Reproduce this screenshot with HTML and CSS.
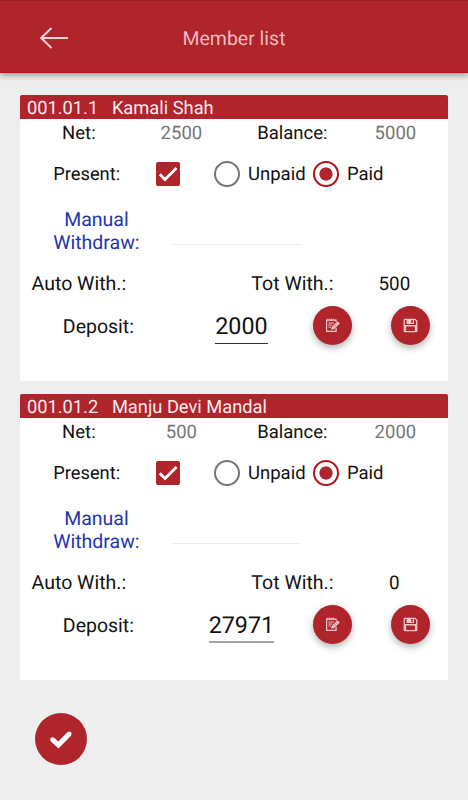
FILE: index.html
```html
<!DOCTYPE html>
<html lang="en">
<head>
  <meta charset="UTF-8" />
  <meta name="viewport" content="width=device-width, initial-scale=1" />
  <title>Member list</title>
  <link rel="stylesheet" href="styles.css">
</head>
<body>
  <!-- shared icons -->
  <svg class="icon-defs" xmlns="http://www.w3.org/2000/svg">
    <symbol id="icon-check" viewBox="0 0 24 24">
      <path d="M3.8 12.2 9 17.4 20.5 5.9" fill="none" stroke="#fff" stroke-width="2.8" />
    </symbol>
    <symbol id="icon-edit" viewBox="0 0 16 16">
      <path d="M11.8 10.5v3.7H1.7V2.3h10.1v1.6" fill="none" stroke="#f3c9cc" stroke-width="1.3" />
      <path d="M3 .7v2M5.1 .7v2M7.2 .7v2M9.3 .7v2" stroke="#f3c9cc" stroke-width="1" />
      <path d="M3.6 5.3h6M3.6 7.5h4.3M3.6 9.7h2.8" stroke="#f3c9cc" stroke-width="1" />
      <path d="M6.4 12.6l1-3.4L13.3 3.5l2.5 2.4-6 5.9z" fill="#f3c9cc" />
      <path d="M9 9.9l4.2-4.1" stroke="#b0242c" stroke-width=".5" />
    </symbol>
    <symbol id="icon-save" viewBox="0 0 16 16">
      <path d="M2 1.4h10.8l1.9 1.9v10.2a1 1 0 0 1-1 1H2.3a1 1 0 0 1-1-1V2.1a.7.7 0 0 1 .7-.7z" fill="none" stroke="#f3c9cc" stroke-width="1.4" />
      <path d="M2.6 14V8.2h10.8V14" fill="none" stroke="#f3c9cc" stroke-width="1.5" />
      <path d="M3.8 1.4h7.9v4.9H3.8z" fill="#f3c9cc" />
      <path d="M8.8 2.2h1.6v3.1H8.8z" fill="#b0242c" />
    </symbol>
  </svg>

  <header class="top-bar">
    <svg class="back" viewBox="0 0 30 24">
      <path d="M12.5 2 2.2 12l10.3 10M2.2 12H29" fill="none" stroke="#f6d3d5" stroke-width="2" />
    </svg>
    <h1>Member list</h1>
  </header>

  <main class="list">
    <section class="card">
      <div class="card-title"><span class="code">001.01.1</span><span>Kamali Shah</span></div>
      <div class="row net">
        <span>Net:</span>
        <span class="muted">2500</span>
        <span>Balance:</span>
        <span class="muted">5000</span>
      </div>
      <div class="row present">
        <span class="present-label">Present:</span>
        <span class="checkbox"><svg><use href="#icon-check" /></svg></span>
        <span class="radio"></span>
        <span class="unpaid">Unpaid</span>
        <span class="radio selected"></span>
        <span class="paid">Paid</span>
      </div>
      <div class="row manual">
        <span class="manual-label">Manual<br>Withdraw:</span>
        <span class="manual-input"></span>
      </div>
      <div class="row totals">
        <span>Auto With.:</span>
        <span></span>
        <span>Tot With.:</span>
        <span class="total">500</span>
      </div>
      <div class="row deposit">
        <span class="deposit-label">Deposit:</span>
        <span class="deposit-cell"><span class="amount">2000</span></span>
        <button class="round"><svg><use href="#icon-edit" /></svg></button>
        <button class="round save"><svg><use href="#icon-save" /></svg></button>
      </div>
    </section>

    <section class="card">
      <div class="card-title"><span class="code">001.01.2</span><span>Manju Devi Mandal</span></div>
      <div class="row net">
        <span>Net:</span>
        <span class="muted">500</span>
        <span>Balance:</span>
        <span class="muted">2000</span>
      </div>
      <div class="row present">
        <span class="present-label">Present:</span>
        <span class="checkbox"><svg><use href="#icon-check" /></svg></span>
        <span class="radio"></span>
        <span class="unpaid">Unpaid</span>
        <span class="radio selected"></span>
        <span class="paid">Paid</span>
      </div>
      <div class="row manual">
        <span class="manual-label">Manual<br>Withdraw:</span>
        <span class="manual-input"></span>
      </div>
      <div class="row totals">
        <span>Auto With.:</span>
        <span></span>
        <span>Tot With.:</span>
        <span class="total">0</span>
      </div>
      <div class="row deposit">
        <span class="deposit-label">Deposit:</span>
        <span class="deposit-cell"><span class="amount focused">27971</span></span>
        <button class="round"><svg><use href="#icon-edit" /></svg></button>
        <button class="round save"><svg><use href="#icon-save" /></svg></button>
      </div>
    </section>
  </main>

  <button class="submit">
    <svg viewBox="0 0 24 24">
      <path d="M3.8 12.2 9.6 17.6 20 7" fill="none" stroke="#fff" stroke-width="4.6" />
      <path d="M3.8 12.2 9.6 17.6 20 7" fill="none" stroke="#fff" stroke-width="3.6" stroke-linecap="round" />
    </svg>
  </button>
</body>
</html>
```
FILE: styles.css
```css
* {
  box-sizing: border-box;
}
body {
  margin: 0;
  min-height: 800px;
  background-color: #eee;
  color: #111;
  font-family: Roboto, "Liberation Sans", sans-serif;
  font-size: 19.5px;
  line-height: 23px;
  text-rendering: geometricPrecision;
}
.icon-defs {
  display: block;
  width: 0;
  height: 0;
}
.top-bar {
  display: grid;
  grid-template-columns: 1fr auto 1fr;
  align-items: center;
  height: 73px;
  padding-top: 2px;
  background-color: #b0242c;
  border-top: 1px solid #9c2027;
  border-bottom: 1px solid #b5121a;
  box-shadow: 0 2px 6px rgba(0, 0, 0, 0.4);
}
.back {
  width: 30px;
  height: 24px;
  margin-left: 39px;
}
.top-bar h1 {
  margin: 1px 0 0;
  color: #eebabd;
  font-size: 19.5px;
  font-weight: 400;
}
.list {
  display: flex;
  flex-direction: column;
  gap: 13px;
  padding: 22px 20.5px 0 20.4px;
}
.card {
  height: 286px;
  background-color: #fff;
  border-radius: 2px;
  overflow: hidden;
}
.card-title {
  display: flex;
  height: 24px;
  padding-left: 6.5px;
  background-color: #b0242c;
  color: #fbeced;
  font-size: 18.3px;
  line-height: 28px;
}
.code {
  width: 85px;
}
.row {
  display: flex;
  align-items: center;
}
.net,
.totals {
  display: grid;
  grid-template-columns: 117px 88px 134px 72px;
  text-align: center;
}
.net {
  height: 28px;
  font-size: 18.5px;
}
.muted {
  color: #757575;
}
.present {
  height: 54px;
  font-size: 18.5px;
}
.present-label {
  width: 135.6px;
  padding-right: 3px;
  font-size: 18.3px;
  text-align: center;
}
.checkbox {
  width: 24px;
  height: 24px;
  border-radius: 2px;
  background-color: #b0242c;
}
.checkbox svg {
  display: block;
  width: 24px;
  height: 24px;
}
.radio {
  width: 26px;
  height: 26px;
  margin-left: 34px;
  border: 2.5px solid #757575;
  border-radius: 50%;
}
.radio.selected {
  margin-left: 0;
  border-color: #b5121a;
  background: radial-gradient(circle, #b0242c 6.2px, #fff 7px);
}
.unpaid {
  width: 73px;
  padding-left: 8px;
}
.paid {
  padding-left: 8px;
}
.manual {
  height: 58px;
  padding-top: 2px;
}
.manual-label {
  width: 152px;
  color: #1f35b0;
  text-align: center;
}
.manual-input {
  width: 129px;
  height: 34px;
  align-self: flex-start;
  margin-top: 8px;
  border-bottom: 1px solid #ededed;
}
.totals {
  height: 48px;
}
.total {
  padding: 2px 2px 0 0;
  font-size: 18.8px;
}
.deposit {
  height: 38px;
  margin-top: -1px;
}
.deposit-label {
  width: 156px;
  padding-top: 2px;
  text-align: center;
}
.deposit-cell {
  width: 130px;
  margin-right: 6.6px;
  text-align: center;
}
.amount {
  display: inline-block;
  height: 37px;
  border-bottom: 1px solid #333;
  font-size: 23.3px;
  line-height: 38px;
  vertical-align: middle;
}
.amount.focused {
  border-bottom: 2px solid #a5a5a5;
}
.round {
  display: flex;
  align-items: center;
  justify-content: center;
  width: 39px;
  height: 39px;
  padding: 0;
  border: none;
  border-radius: 50%;
  background-color: #b0242c;
  box-shadow: 0 3px 7px rgba(0, 0, 0, 0.3);
}
.round.save {
  margin-left: 39px;
}
.round svg {
  width: 15px;
  height: 15px;
}
.submit {
  display: flex;
  align-items: center;
  justify-content: center;
  width: 52px;
  height: 52px;
  margin: 33px 0 0 35px;
  padding: 0;
  border: none;
  border-radius: 50%;
  background-color: #b0242c;
}
.submit svg {
  width: 26px;
  height: 26px;
}
```
